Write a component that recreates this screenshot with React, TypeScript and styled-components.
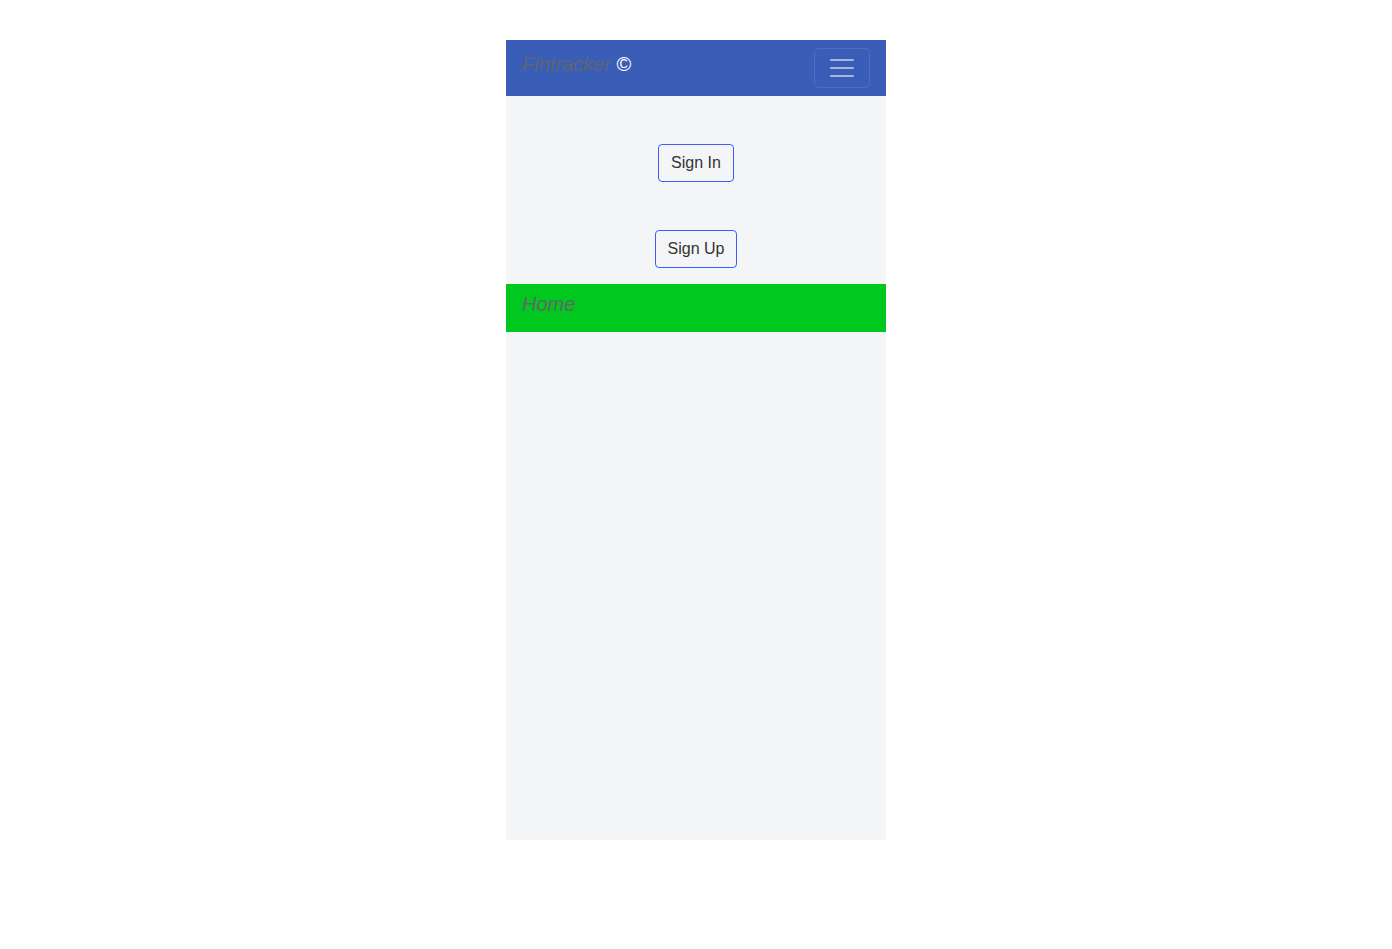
import React from "react";
import styled, { createGlobalStyle } from "styled-components";

const Global = createGlobalStyle`
  html, body { margin: 0; padding: 0; background: #ffffff; }
  body { font-family: "Liberation Sans", Arial, sans-serif; }
  * { box-sizing: border-box; }
`;

const Page = styled.div`
  width: 380px;
  height: 800px;
  margin: 40px auto 0;
  background: #f4f5f7;
  display: flex;
  flex-direction: column;
`;

const NavBar = styled.nav`
  height: 56px;
  background: #3a5eb8;
  display: flex;
  align-items: center;
  justify-content: space-between;
  padding: 8px 16px;
`;

const Brand = styled.div`
  font-size: 20px;
  line-height: 30px;
  align-self: flex-start;
  padding-top: 1px;
  color: #ffffff;
`;

const BrandName = styled.span`
  font-style: italic;
  color: #5c6670;
`;

const Toggler = styled.button`
  width: 56px;
  height: 40px;
  border: 1px solid rgba(255, 255, 255, 0.1);
  border-radius: 5px;
  background: transparent;
  display: flex;
  align-items: center;
  justify-content: center;
  padding: 0;
`;

const ButtonRow = styled.div<{ $top: number }>`
  display: flex;
  justify-content: center;
  margin-top: ${(p) => p.$top}px;
`;

const OutlineButton = styled.button`
  font-family: "Liberation Sans", Arial, sans-serif;
  font-size: 16px;
  line-height: 24px;
  padding: 6px 12px;
  color: #333333;
  background: transparent;
  border: 1px solid #3d5cfb;
  border-radius: 4px;
`;

const HomeBar = styled.div`
  margin-top: 16px;
  height: 48px;
  background: #00c81f;
  padding: 6px 16px;
  font-size: 20px;
  line-height: 28px;
  font-style: italic;
  color: #5f6868;
`;

export default function App() {
  return (
    <>
      <Global />
      <Page>
        <NavBar>
          <Brand>
            <BrandName>Fintracker</BrandName> ©
          </Brand>
          <Toggler aria-label="menu">
            <svg width="30" height="30" viewBox="0 0 30 30">
              <path
                d="M4 7h22M4 15h22M4 23h22"
                stroke="rgba(255,255,255,0.55)"
                strokeWidth="2"
                strokeLinecap="round"
              />
            </svg>
          </Toggler>
        </NavBar>
        <ButtonRow $top={48}>
          <OutlineButton>Sign In</OutlineButton>
        </ButtonRow>
        <ButtonRow $top={48}>
          <OutlineButton>Sign Up</OutlineButton>
        </ButtonRow>
        <HomeBar>Home</HomeBar>
      </Page>
    </>
  );
}
